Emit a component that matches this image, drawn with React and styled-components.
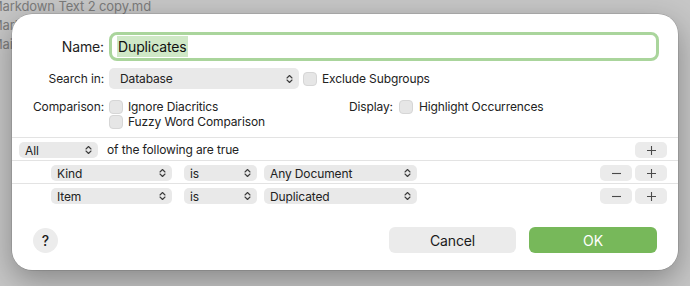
import React from 'react';
import styled, { createGlobalStyle } from 'styled-components';

const GlobalStyle = createGlobalStyle`
  html, body {
    margin: 0;
    padding: 0;
  }
  body {
    font-family: Inter, "Liberation Sans", sans-serif;
    color: #222;
    letter-spacing: -0.12px;
    -webkit-font-smoothing: antialiased;
  }
`;

const Backdrop = styled.div`
  position: relative;
  width: 690px;
  height: 286px;
  overflow: hidden;
  background: #c6c6c6;
`;

const FileList = styled.ul`
  margin: 0 0 0 -9px;
  padding: 0;
  list-style: none;

  li {
    height: 19px;
    line-height: 13px;
    font-size: 13px;
    color: #7b7b7b;
    white-space: nowrap;
  }
`;

const Dialog = styled.div`
  position: absolute;
  left: 12px;
  top: 14px;
  width: 666px;
  height: 256px;
  box-sizing: border-box;
  display: flex;
  flex-direction: column;
  padding-top: 18px;
  background: #fff;
  border-radius: 20px;
  box-shadow: 0 0 0 0.5px rgba(0, 0, 0, 0.2), 0 10px 30px rgba(0, 0, 0, 0.32);
`;

const Form = styled.div`
  display: grid;
  grid-template-columns: 92px 1fr;
  column-gap: 5px;
  padding-right: 19px;
  font-size: 12px;
`;

const Label = styled.div`
  display: flex;
  align-items: center;
  justify-content: flex-end;
  margin-top: ${({ $gap }) => $gap || 0}px;
  height: ${({ $h }) => $h}px;
  font-size: ${({ $big }) => ($big ? '14px' : '12px')};
  color: #1e1e1e;
  white-space: nowrap;
`;

const Cell = styled.div`
  display: flex;
  align-items: ${({ $top }) => ($top ? 'flex-start' : 'center')};
  margin-top: ${({ $gap }) => $gap || 0}px;
  min-height: ${({ $h }) => $h || 0}px;
`;

const NameField = styled.div`
  flex: 1;
  height: 29px;
  box-sizing: border-box;
  display: flex;
  align-items: center;
  padding-left: 5px;
  border: 3px solid #aad59c;
  border-radius: 8px;
  font-size: 14px;
  color: #111;

  span {
    background: #cfe8c6;
    line-height: 21px;
    padding: 0 1px;
  }
`;

const Popup = styled.div`
  width: ${({ $w }) => $w}px;
  height: ${({ $h }) => $h || 16}px;
  margin-left: ${({ $ml }) => $ml || 0}px;
  box-sizing: border-box;
  flex: none;
  display: flex;
  align-items: center;
  justify-content: space-between;
  padding: 0 6px 0 ${({ $pl }) => $pl || 6}px;
  background: #e9e9e9;
  border-radius: 5px;
  font-size: 12px;
  color: #222;
`;

const Check = styled.span`
  width: 14px;
  height: 14px;
  flex: none;
  box-sizing: border-box;
  background: #e6e6e6;
  border: 0.5px solid #d6d6d6;
  border-radius: 4px;
`;

const CheckRow = styled.label`
  display: flex;
  align-items: center;
  gap: 5px;
  height: ${({ $h }) => $h || 15}px;
  margin-left: ${({ $ml }) => $ml || 0}px;
  font-size: 12px;
  color: #222;
  white-space: nowrap;
`;

const CheckStack = styled.div`
  width: 240px;
  display: flex;
  flex-direction: column;
`;

const DisplayGroup = styled.div`
  display: flex;
  align-items: center;
  gap: 6px;
  height: 15px;
  white-space: nowrap;
`;

const Separator = styled.div`
  height: 1px;
  background: #e3e3e3;
  margin-top: ${({ $gap }) => $gap || 0}px;
`;

const CondRow = styled.div`
  display: flex;
  align-items: flex-start;
  height: 22px;
  box-sizing: border-box;
  padding: 4px 11px 0 ${({ $indent }) => $indent}px;
  font-size: 12px;
`;

const Spacer = styled.div`
  flex: 1;
`;

const Phrase = styled.span`
  margin-left: 9px;
  line-height: 16px;
`;

const StepButtons = styled.div`
  display: flex;
  gap: 3px;
`;

const StepButton = styled.div`
  width: 32px;
  height: 16px;
  display: flex;
  align-items: center;
  justify-content: center;
  background: #ebebeb;
  border-radius: 5px;
`;

const Footer = styled.div`
  margin-top: auto;
  display: flex;
  align-items: center;
  padding: 0 21px 17px;
`;

const HelpButton = styled.div`
  width: 25px;
  height: 25px;
  border-radius: 50%;
  background: #ececec;
  display: flex;
  align-items: center;
  justify-content: center;
  font-size: 14px;
  font-weight: 500;
  color: #1a1a1a;
`;

const Button = styled.div`
  width: ${({ $w }) => $w}px;
  height: 26px;
  margin-left: ${({ $gap }) => $gap || 0}px;
  display: flex;
  align-items: center;
  justify-content: center;
  border-radius: 6px;
  font-size: 14px;
  background: ${({ $primary }) => ($primary ? '#77b85a' : '#ebebeb')};
  color: ${({ $primary }) => ($primary ? '#fff' : '#1a1a1a')};
`;

const Chevrons = () => (
  <svg width="7" height="10" viewBox="0 0 7 10">
    <path
      d="M1 4 L3.5 1.5 L6 4 M1 6 L3.5 8.5 L6 6"
      fill="none"
      stroke="#3c3c3c"
      strokeWidth="1.1"
      strokeLinecap="round"
      strokeLinejoin="round"
    />
  </svg>
);

const Plus = () => (
  <svg width="11" height="11" viewBox="0 0 11 11">
    <path d="M5.5 1 V10 M1 5.5 H10" stroke="#4a4a4a" strokeWidth="1.1" />
  </svg>
);

const Minus = () => (
  <svg width="11" height="11" viewBox="0 0 11 11">
    <path d="M1 5.5 H10" stroke="#4a4a4a" strokeWidth="1.1" />
  </svg>
);

const Select = ({ w, h, label, pl, ml }) => (
  <Popup $w={w} $h={h} $pl={pl} $ml={ml}>
    <span>{label}</span>
    <Chevrons />
  </Popup>
);

const conditions = [
  { field: 'Kind', op: 'is', value: 'Any Document' },
  { field: 'Item', op: 'is', value: 'Duplicated' },
];

const App = () => {
  return (
    <>
      <GlobalStyle />
      <Backdrop>
        <FileList>
          <li>Markdown Text 2 copy.md</li>
          <li>Markdown Text 2.md</li>
          <li>Maintenance.md</li>
        </FileList>

        <Dialog>
          <Form>
            <Label $h={29} $big>Name:</Label>
            <Cell $h={29}>
              <NameField>
                <span>Duplicates</span>
              </NameField>
            </Cell>

            <Label $h={21} $gap={7}>Search in:</Label>
            <Cell $h={21} $gap={7}>
              <Select w={190} h={21} pl={11} label="Database" />
              <CheckRow $h={21} $ml={4}>
                <Check />
                Exclude Subgroups
              </CheckRow>
            </Cell>

            <Label $h={15} $gap={10}>Comparison:</Label>
            <Cell $top $gap={10}>
              <CheckStack>
                <CheckRow>
                  <Check />
                  Ignore Diacritics
                </CheckRow>
                <CheckRow>
                  <Check />
                  Fuzzy Word Comparison
                </CheckRow>
              </CheckStack>
              <DisplayGroup>
                <span>Display:</span>
                <Check />
                <span>Highlight Occurrences</span>
              </DisplayGroup>
            </Cell>
          </Form>

          <Separator $gap={8} />
          <CondRow $indent={7}>
            <Select w={79} label="All" />
            <Phrase>of the following are true</Phrase>
            <Spacer />
            <StepButton>
              <Plus />
            </StepButton>
          </CondRow>

          {conditions.map((c) => (
            <React.Fragment key={c.field}>
              <Separator />
              <CondRow $indent={39}>
                <Select w={121} label={c.field} />
                <Select w={73} ml={12} label={c.op} />
                <Select w={153} ml={7} label={c.value} />
                <Spacer />
                <StepButtons>
                  <StepButton>
                    <Minus />
                  </StepButton>
                  <StepButton>
                    <Plus />
                  </StepButton>
                </StepButtons>
              </CondRow>
            </React.Fragment>
          ))}

          <Footer>
            <HelpButton>?</HelpButton>
            <Spacer />
            <Button $w={127}>Cancel</Button>
            <Button $w={128} $gap={13} $primary>
              OK
            </Button>
          </Footer>
        </Dialog>
      </Backdrop>
    </>
  );
};

export default App;
